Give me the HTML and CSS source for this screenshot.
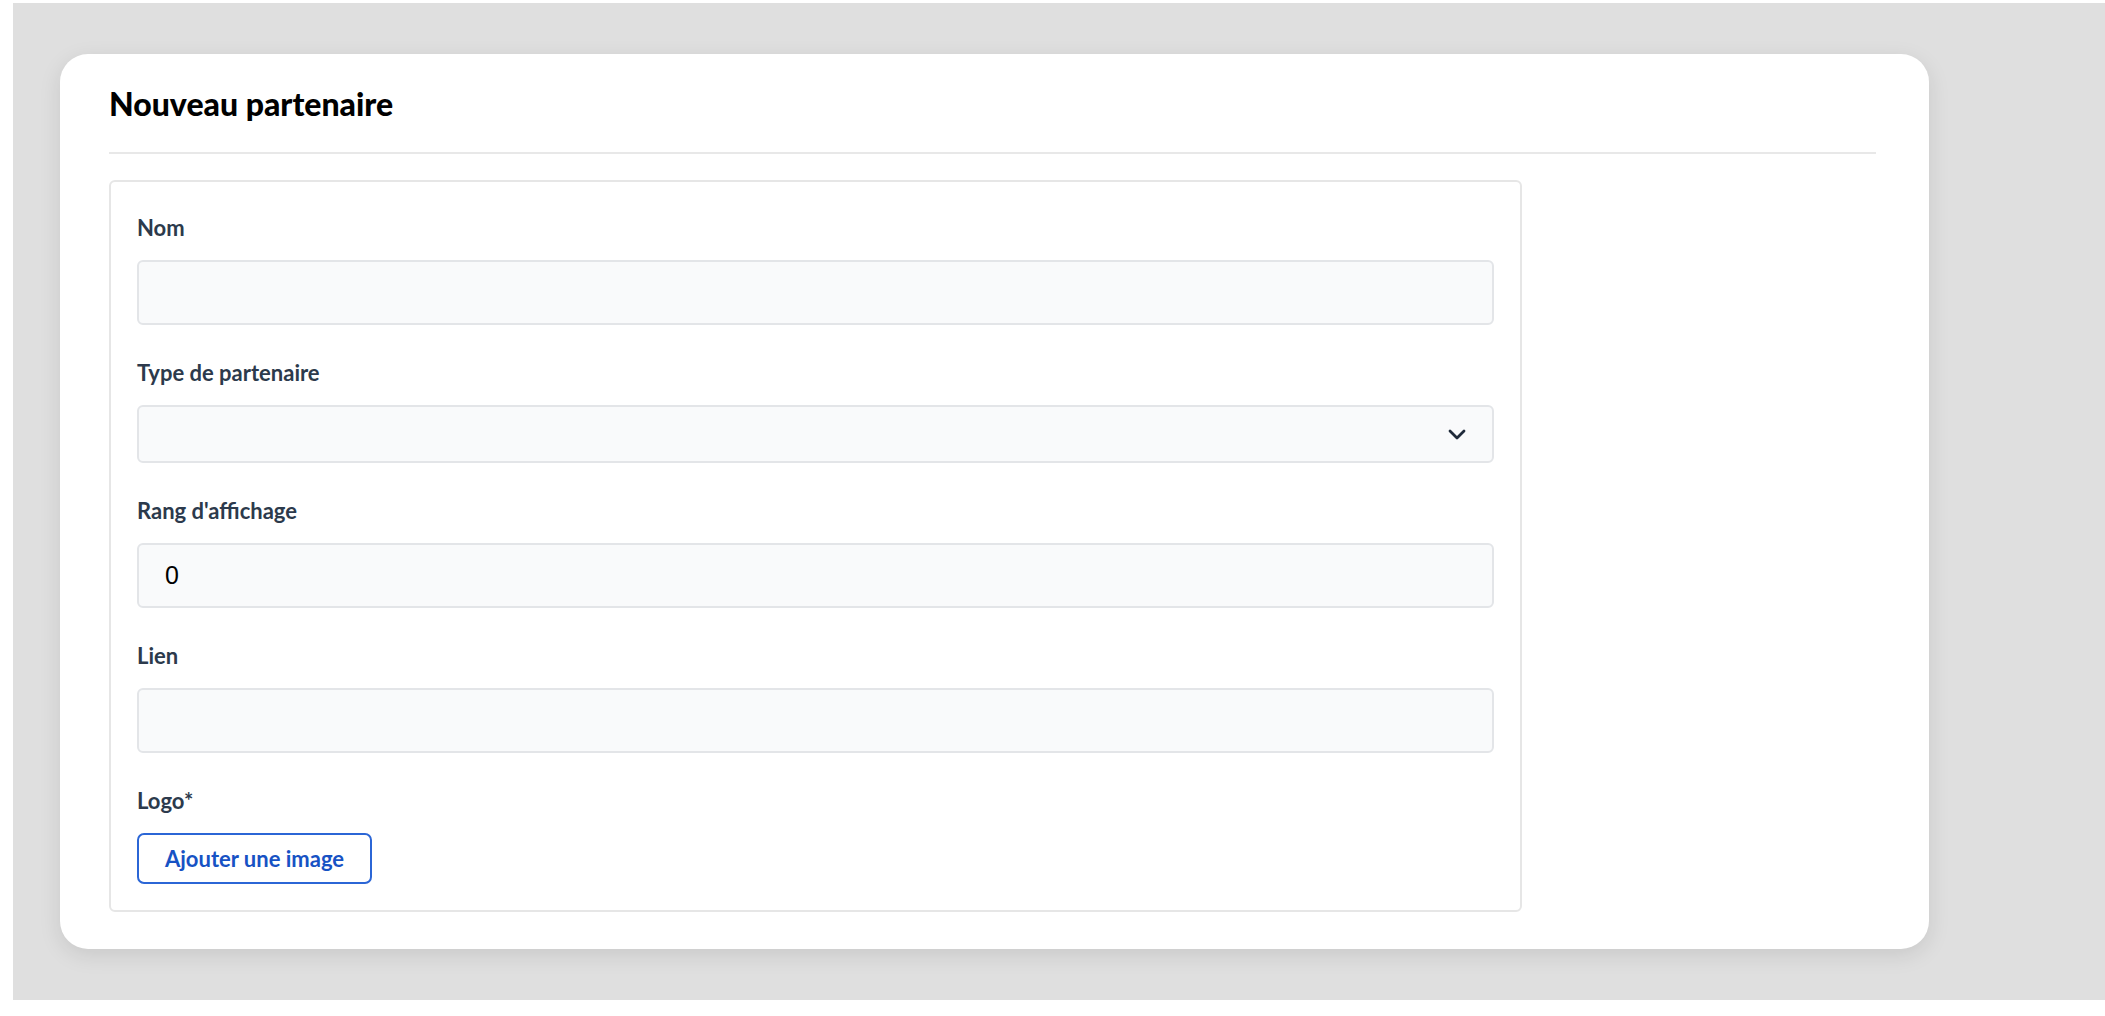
FILE: index.html
```html
<!DOCTYPE html>
<html lang="fr">

<head>
    <meta charset="UTF-8">
    <meta name="viewport" content="width=device-width, initial-scale=1.0">
    <title>Nouveau partenaire</title>
    <link rel="stylesheet" href="styles.css">
</head>

<body>
    <div class="screen">
        <div class="card">
            <h1 class="card-title">Nouveau partenaire</h1>

            <form class="form-box">
                <div class="field">
                    <label class="label" for="nom">Nom</label>
                    <input class="input" id="nom" type="text">
                </div>

                <div class="field">
                    <label class="label" for="type">Type de partenaire</label>
                    <div class="select" id="type">
                        <svg class="chevron" width="18" height="11" viewBox="0 0 18 11">
                            <path d="M2 2 L9 9 L16 2" fill="none" stroke="#1f2a3a" stroke-width="2.8" stroke-linecap="round" stroke-linejoin="round" />
                        </svg>
                    </div>
                </div>

                <div class="field">
                    <label class="label" for="rang">Rang d'affichage</label>
                    <input class="input" id="rang" type="text" value="0">
                </div>

                <div class="field">
                    <label class="label" for="lien">Lien</label>
                    <input class="input" id="lien" type="text">
                </div>

                <div class="field">
                    <span class="label">Logo*</span>
                    <div>
                        <button class="btn-outline" type="button">Ajouter une image</button>
                    </div>
                </div>
            </form>
        </div>
    </div>
</body>

</html>
```

FILE: styles.css
```css
* {
    padding: 0;
    margin: 0;
    box-sizing: border-box;
}

body {
    background-color: #fff;
    font-family: Lato, "Noto Sans", sans-serif;
}

.screen {
    margin: 3px 0 0 13px;
    height: 997px;
    padding: 51px 0 0 47px;
    background-color: #dfdfdf;
}

.card {
    width: 1869px;
    height: 895px;
    padding: 30px 53px 0 49px;
    background-color: #fff;
    border-radius: 28px;
    box-shadow: 0 6px 22px rgba(0, 0, 0, 0.10);
}

.card-title {
    font-size: 32px;
    line-height: 40px;
    font-weight: 900;
    color: #000;
    padding-bottom: 28px;
    border-bottom: 2px solid #e8e8e8;
}

.form-box {
    width: 1413px;
    margin-top: 26px;
    padding: 32px 26px 26px;
    border: 2px solid #e6e6e6;
    border-radius: 6px;
    display: flex;
    flex-direction: column;
    gap: 34px;
}

.field {
    display: flex;
    flex-direction: column;
}

.label {
    font-size: 22px;
    line-height: 28px;
    font-weight: 700;
    color: #2c3a4c;
    margin-bottom: 18px;
}

.input,
.select {
    width: 100%;
    height: 65px;
    background-color: #f9fafb;
    border: 2px solid #e3e5e8;
    border-radius: 6px;
    outline: none;
}

.input {
    padding: 0 26px;
    font-family: "Liberation Sans", Arial, sans-serif;
    font-size: 25px;
    color: #000;
}

.select {
    height: 58px;
    display: flex;
    align-items: center;
    justify-content: flex-end;
    padding-right: 26px;
}

.btn-outline {
    height: 51px;
    padding: 0 26px;
    background-color: #fff;
    border: 2px solid #2b66d6;
    border-radius: 7px;
    font-family: Lato, "Noto Sans", sans-serif;
    font-size: 22px;
    font-weight: 700;
    color: #1752c4;
}
```
